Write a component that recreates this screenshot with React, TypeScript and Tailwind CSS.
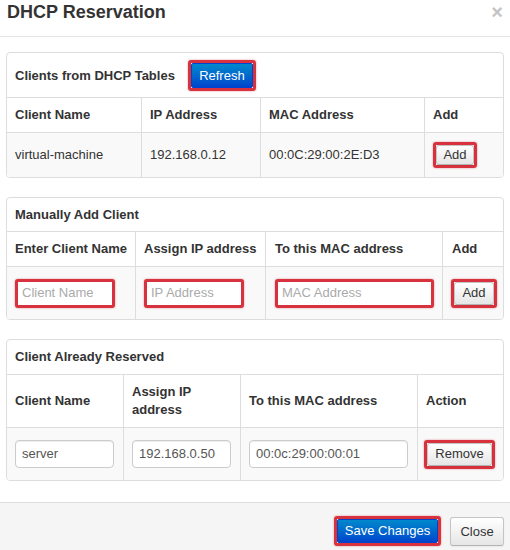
import React from "react";

const redBox = "inline-flex rounded-[3px] border-[3px] border-[#d7323d] shadow-[0_0_2px_rgba(200,30,40,0.5)]";
const defBtn =
  "flex items-center justify-center bg-gradient-to-b from-white to-[#e6e6e6] text-[#333] text-[13px] border border-[#c5c5c5] border-b-[#b3b3b3] rounded-[3px] shadow-[inset_0_1px_0_rgba(255,255,255,0.2),0_1px_2px_rgba(0,0,0,0.05)]";
const priBtn =
  "flex items-center justify-center bg-gradient-to-b from-[#0088cc] to-[#0044cc] text-white text-[13px] border border-[#0044cc] rounded-[2px]";

function Cell({ children, first, className = "" }: { children?: React.ReactNode; first?: boolean; className?: string }) {
  return (
    <div className={`flex items-center px-[8px] ${first ? "" : "border-l border-[#ddd]"} ${className}`}>{children}</div>
  );
}

function PlainInput({ value, w }: { value: string; w: string }) {
  return (
    <div className={`${w} h-[28px] flex items-center px-[6px] bg-white border border-[#ccc] rounded-[4px] text-[13px] text-[#555] shadow-[inset_0_1px_1px_rgba(0,0,0,0.075)]`}>
      {value}
    </div>
  );
}

function RedInput({ placeholder, w }: { placeholder: string; w: string }) {
  return (
    <div className={`${w} h-[29px] flex items-center px-[4px] bg-white border-[3px] border-[#d7323d] rounded-[3px] text-[13px] text-[#aaa] shadow-[0_0_2px_rgba(200,30,40,0.5)]`}>
      {placeholder}
    </div>
  );
}

export default function App() {
  return (
    <div className="w-[510px] h-[550px] bg-white font-['Liberation_Sans',Arial,sans-serif] text-[13px] text-[#333] flex flex-col overflow-hidden">
      {/* Header */}
      <div className="h-[37px] shrink-0 border-b border-[#e5e5e5] flex items-start justify-between pl-[7px] pr-[7px]">
        <div className="pt-[2px] text-[18px] leading-[20px] font-bold text-[#333]">DHCP Reservation</div>
        <div className="pt-[2px] text-[20px] leading-[20px] font-bold text-[#c4c4c4]">×</div>
      </div>

      {/* Body */}
      <div className="px-[6px] pt-[15px] flex flex-col gap-[19px]">
        {/* Panel 1 */}
        <div className="border border-[#ddd] rounded-[4px] overflow-hidden">
          <div className="h-[45px] border-b border-[#ddd] flex items-center pl-[8px] pt-[1px]">
            <span className="font-bold">Clients from DHCP Tables</span>
            <span className={`${redBox} ml-[13px]`}>
              <span className={`${priBtn} w-[62px] h-[25px]`}>Refresh</span>
            </span>
          </div>
          <div className="grid grid-cols-[134px_119px_164px_1fr] h-[35px] border-b border-[#ddd] font-bold">
            <Cell first>Client Name</Cell>
            <Cell>IP Address</Cell>
            <Cell>MAC Address</Cell>
            <Cell>Add</Cell>
          </div>
          <div className="grid grid-cols-[134px_119px_164px_1fr] h-[44px] bg-[#f9f9f9]">
            <Cell first>virtual-machine</Cell>
            <Cell>192.168.0.12</Cell>
            <Cell>00:0C:29:00:2E:D3</Cell>
            <Cell>
              <span className={redBox}>
                <span className={`${defBtn} w-[38px] h-[20px]`}>Add</span>
              </span>
            </Cell>
          </div>
        </div>

        {/* Panel 2 */}
        <div className="border border-[#ddd] rounded-[4px] overflow-hidden">
          <div className="h-[34px] border-b border-[#ddd] flex items-center pl-[8px] font-bold">Manually Add Client</div>
          <div className="grid grid-cols-[128px_130px_177px_1fr] h-[35px] border-b border-[#ddd] font-bold whitespace-nowrap">
            <Cell first>Enter Client Name</Cell>
            <Cell>Assign IP address</Cell>
            <Cell className="pl-[9px]">To this MAC address</Cell>
            <Cell className="pl-[9px]">Add</Cell>
          </div>
          <div className="grid grid-cols-[128px_130px_177px_1fr] h-[52px] bg-[#f9f9f9]">
            <Cell first>
              <RedInput placeholder="Client Name" w="w-[100px]" />
            </Cell>
            <Cell>
              <RedInput placeholder="IP Address" w="w-[100px]" />
            </Cell>
            <Cell className="pl-[9px]">
              <RedInput placeholder="MAC Address" w="w-[160px]" />
            </Cell>
            <Cell className="pl-[8px]">
              <span className={redBox}>
                <span className={`${defBtn} w-[40px] h-[23px]`}>Add</span>
              </span>
            </Cell>
          </div>
        </div>

        {/* Panel 3 */}
        <div className="border border-[#ddd] rounded-[4px] overflow-hidden">
          <div className="h-[35px] border-b border-[#ddd] flex items-center pl-[8px] font-bold">Client Already Reserved</div>
          <div className="grid grid-cols-[116px_117px_177px_1fr] h-[53px] border-b border-[#ddd] font-bold leading-[18px]">
            <Cell first>Client Name</Cell>
            <Cell>Assign IP address</Cell>
            <Cell>To this MAC address</Cell>
            <Cell>Action</Cell>
          </div>
          <div className="grid grid-cols-[116px_117px_177px_1fr] h-[52px] bg-[#f9f9f9]">
            <Cell first>
              <PlainInput value="server" w="w-[99px]" />
            </Cell>
            <Cell>
              <PlainInput value="192.168.0.50" w="w-[99px]" />
            </Cell>
            <Cell>
              <PlainInput value="00:0c:29:00:00:01" w="w-[159px]" />
            </Cell>
            <Cell className="pl-[6px]">
              <span className={redBox}>
                <span className={`${defBtn} w-[65px] h-[23px]`}>Remove</span>
              </span>
            </Cell>
          </div>
        </div>
      </div>

      {/* Footer */}
      <div className="mt-[21px] flex-1 bg-[#f5f5f5] border-t border-[#ddd] flex items-start justify-end gap-[9px] pr-[6px] pt-[13px]">
        <span className={redBox}>
          <span className={`${priBtn} w-[101px] h-[24px]`}>Save Changes</span>
        </span>
        <span className={`${defBtn} w-[54px] h-[29px] mt-[1px]`}>Close</span>
      </div>
    </div>
  );
}
